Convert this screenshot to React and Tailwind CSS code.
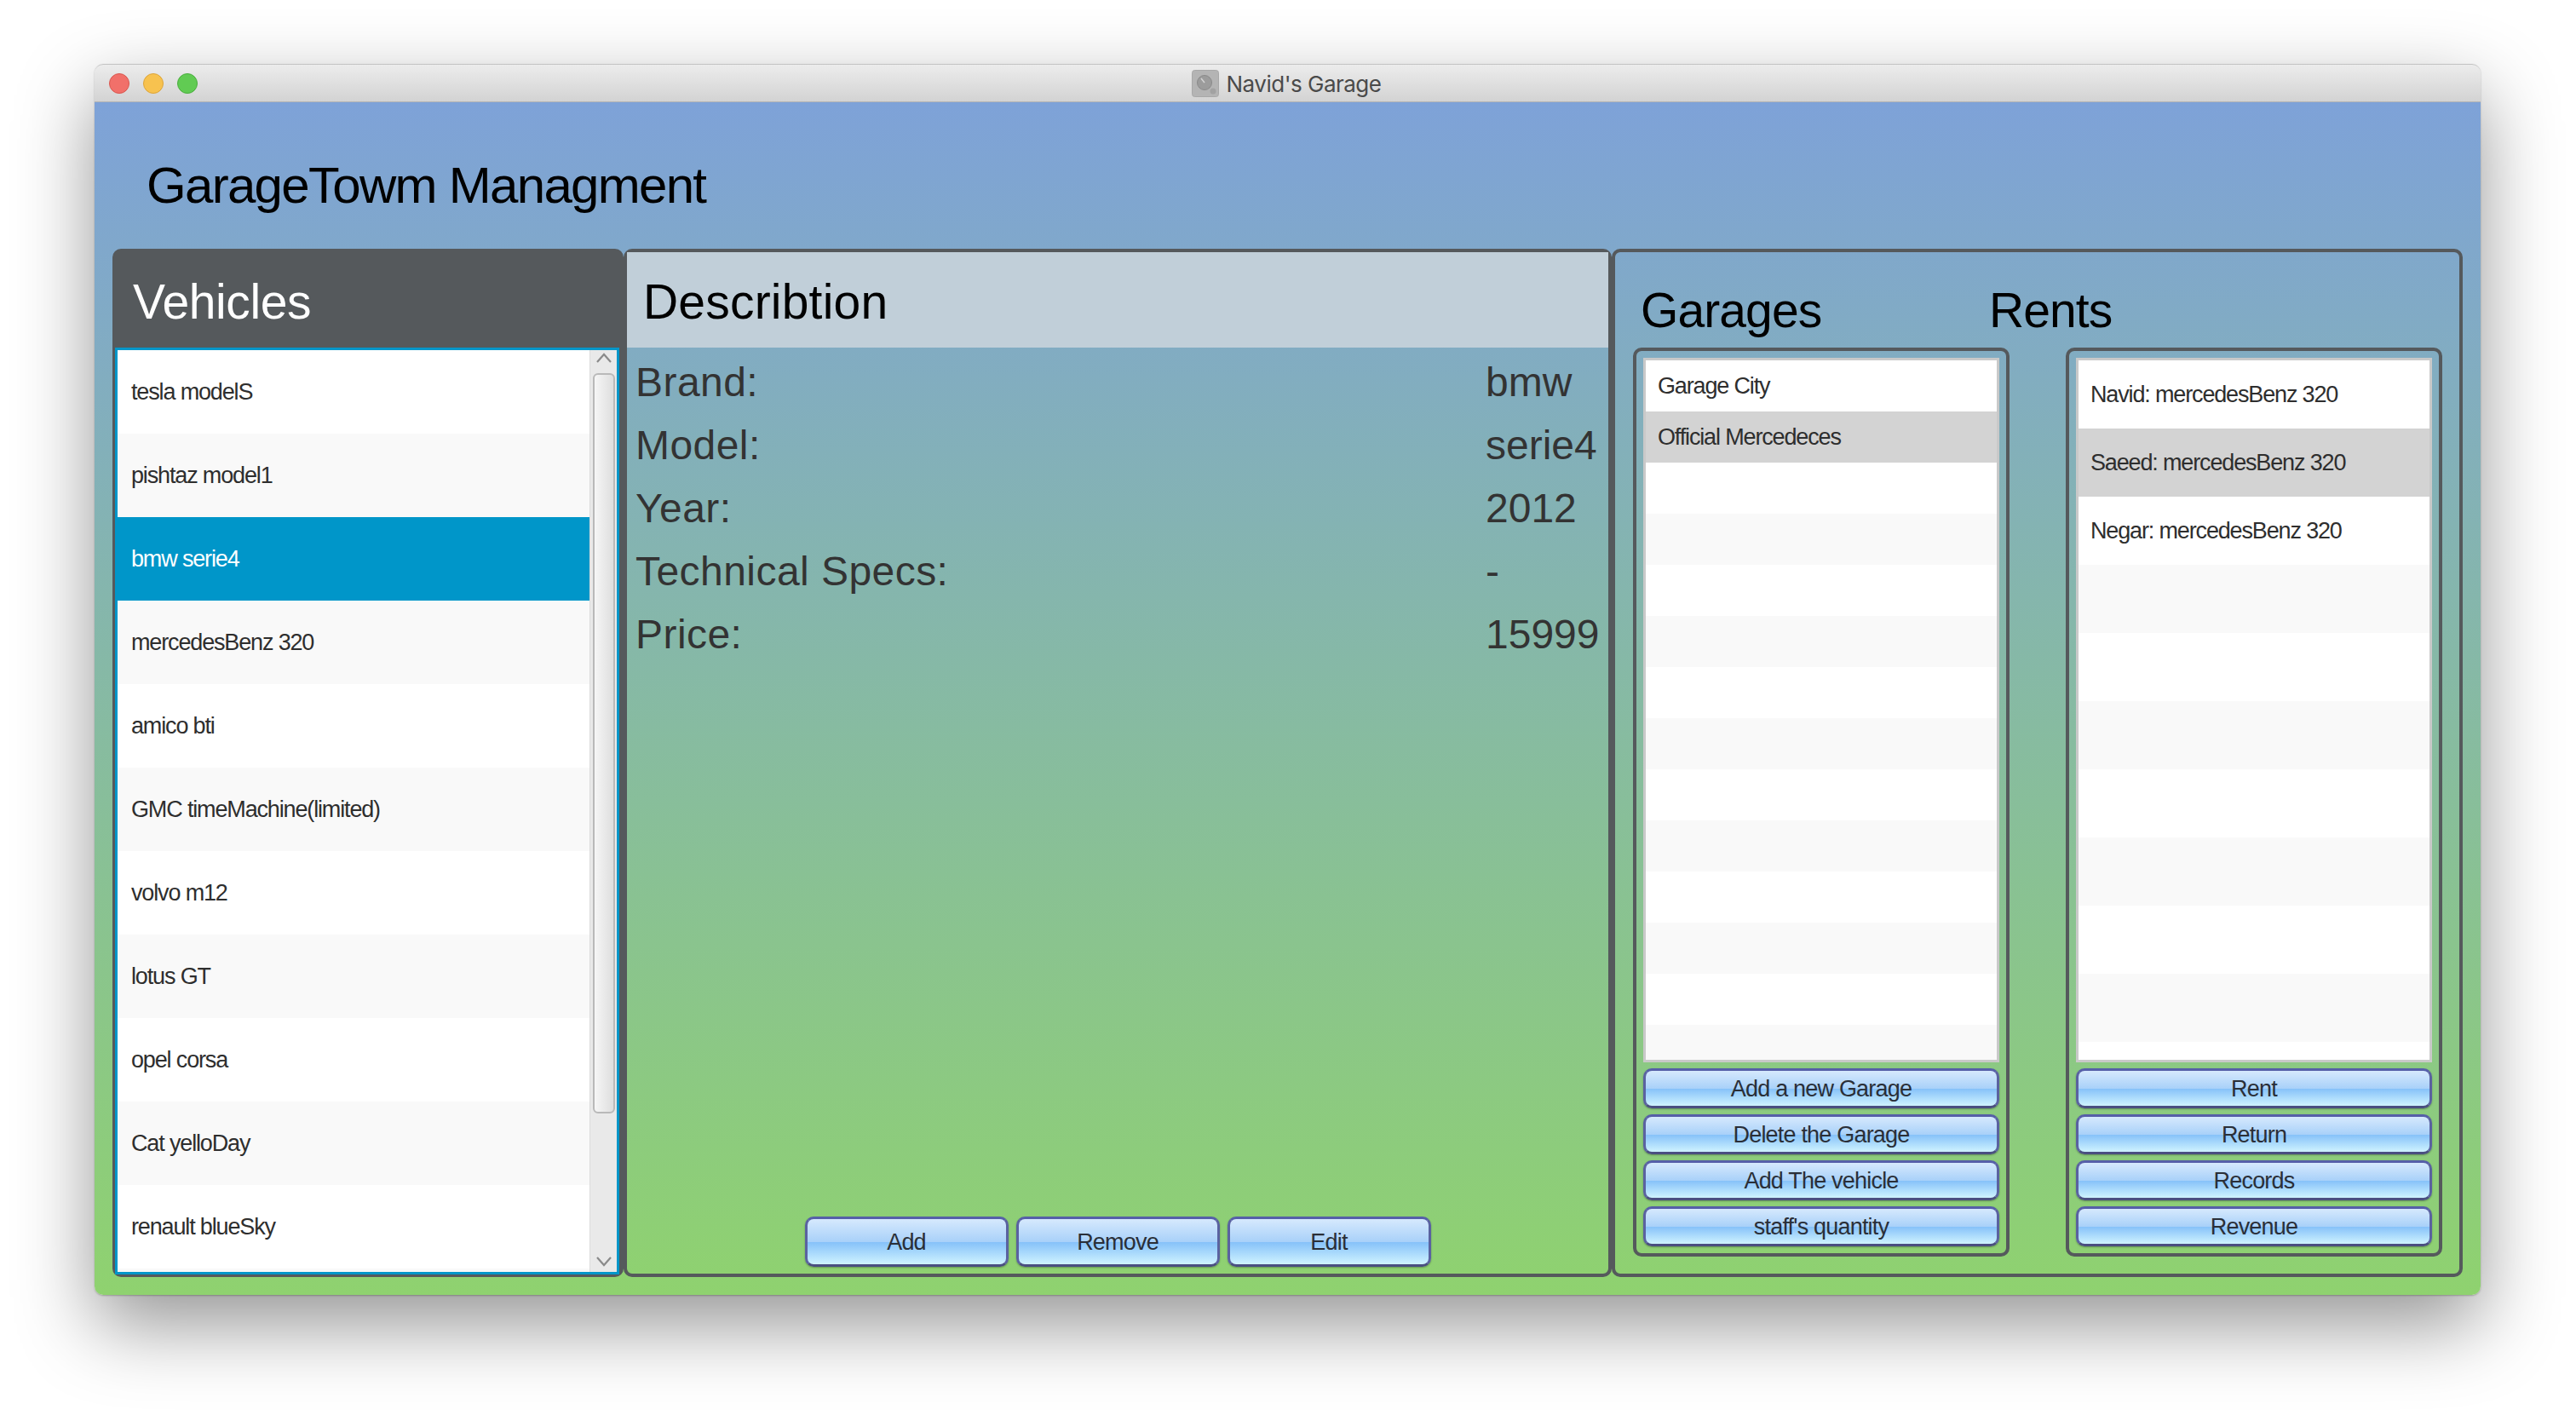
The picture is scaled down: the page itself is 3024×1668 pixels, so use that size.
import React from 'react';

const vehicles = ['tesla modelS', 'pishtaz model1', 'bmw serie4', 'mercedesBenz 320', 'amico bti', 'GMC timeMachine(limited)', 'volvo m12', 'lotus GT', 'opel corsa', 'Cat yelloDay', 'renault blueSky', ''];
const specs = [
  ['Brand:', 'bmw'],
  ['Model:', 'serie4'],
  ['Year:', '2012'],
  ['Technical Specs:', '-'],
  ['Price:', '15999'],
];
const garages = ['Garage City', 'Official Mercedeces', ...Array(12).fill('')];
const rents = ['Navid: mercedesBenz 320', 'Saeed: mercedesBenz 320', 'Negar: mercedesBenz 320', ...Array(8).fill('')];

function GlossButton({ label, className }) {
  return (
    <button className={`rounded-[10px] border-[3px] border-t-[#565fa8] border-x-[#5a62a0] border-b-[#4a4f80] bg-[linear-gradient(#d6e9fd_0%,#a9d1f9_50%,#84c0f9_50%,#cff3ff_100%)] pt-[2px] text-[27px] tracking-[-0.8px] text-[#2a2f38] leading-none shadow-[0_1px_2px_rgba(0,0,0,0.3)] ${className}`}>
      {label}
    </button>
  );
}

function Chevron({ up }) {
  return (
    <svg width="18" height="12" viewBox="0 0 18 12" fill="none" stroke="#8a8a8a" strokeWidth="2.2">
      <polyline points={up ? '1,11 9,2 17,11' : '1,1 9,10 17,1'} />
    </svg>
  );
}

function SideList({ items, rowClass, selected, textPad }) {
  return (
    <div className="h-[827px] border-[3px] border-[#c9c9c9] overflow-hidden bg-white">
      {items.map((t, i) => (
        <div
          key={i}
          className={`${rowClass} flex items-center ${textPad} text-[27px] tracking-[-1.15px] text-[#2e2e2e] ${i === selected ? 'bg-[#d3d3d3]' : i % 2 ? 'bg-[#f9f9f9]' : 'bg-white'}`}
        >
          {t}
        </div>
      ))}
    </div>
  );
}

export default function App() {
  return (
    <div className="w-[3024px] h-[1668px] bg-white pl-[111px] pt-[75px] font-['Liberation_Sans',Arial,sans-serif] overflow-hidden">
      <div className="w-[2801px] h-[1445px] rounded-[10px] flex flex-col shadow-[0_35px_90px_rgba(0,0,0,0.42),0_1px_2px_rgba(0,0,0,0.25)]">
        {/* title bar */}
        <div className="relative h-[45px] shrink-0 rounded-t-[10px] border-t border-[#c4c4c4] border-b border-b-[#b5b5b5] bg-[linear-gradient(#ececec,#d3d3d3)] flex items-center justify-center">
          <div className="absolute left-[17px] top-[10px] flex gap-[16px]">
            <span className="w-[24px] h-[24px] rounded-full bg-[#f1706a] border border-[#d9574f]" />
            <span className="w-[24px] h-[24px] rounded-full bg-[#f7c24f] border border-[#dca53a]" />
            <span className="w-[24px] h-[24px] rounded-full bg-[#61cb53] border border-[#4bae3f]" />
          </div>
          <div className="flex items-center gap-[9px] -ml-[3px]">
            <svg width="32" height="32" viewBox="0 0 32 32">
              <rect x="0.5" y="0.5" width="31" height="31" rx="3" fill="#b4b4b4" stroke="#a8a8a8" />
              <circle cx="15" cy="15" r="8.5" fill="#9c9c9c" stroke="#8a8a8a" />
              <line x1="15" y1="15" x2="11" y2="10" stroke="#d4d4d4" strokeWidth="1.5" />
              <circle cx="25" cy="25" r="3.5" fill="#a2a2a2" />
            </svg>
            <span className="pt-[2px] text-[26px] text-[#4a4a4a] font-['Inter',sans-serif] tracking-[-0.5px]">Navid's Garage</span>
          </div>
        </div>

        {/* window body */}
        <div className="flex-1 min-h-0 flex flex-col rounded-b-[10px] bg-[linear-gradient(#7ea2d8,#8fd26f)] px-[21px] pb-[21px]">
          <div className="h-[172px] shrink-0 pl-[40px] pt-[63px] text-[60px] leading-[70px] tracking-[-1.7px] text-black">GarageTowm Managment</div>

          <div className="flex-1 min-h-0 flex">
            {/* vehicles */}
            <div className="w-[600px] rounded-[10px] bg-[#55595c] pl-[3px] pr-[5px] pb-[3px] flex flex-col">
              <div className="h-[116px] shrink-0 pl-[21px] pt-[30px] text-[57px] leading-[64px] tracking-[-0.4px] text-white">Vehicles</div>
              <div className="flex-1 min-h-0 flex border-[3px] border-[#0096c9] bg-white overflow-hidden">
                <div className="flex-1 overflow-hidden">
                  {vehicles.map((v, i) => (
                    <div
                      key={i}
                      className={`h-[98px] flex items-center pl-[16px] text-[27px] tracking-[-1.15px] ${i === 2 ? 'bg-[#0096c9] text-white' : i % 2 ? 'bg-[#f9f9f9] text-[#2e2e2e]' : 'bg-white text-[#2e2e2e]'}`}
                    >
                      {v}
                    </div>
                  ))}
                </div>
                <div className="w-[32px] shrink-0 bg-[#e9e9e9] border-l border-[#dcdcdc] flex flex-col items-center">
                  <div className="h-[15px] shrink-0 flex items-end"><Chevron up /></div>
                  <div className="w-[26px] h-[869px] shrink-0 mt-[12px] rounded-[6px] border-2 border-[#b9b9b9] bg-[linear-gradient(90deg,#f6f6f6,#dedede)]" />
                  <div className="flex-1 flex items-end pb-[6px]"><Chevron /></div>
                </div>
              </div>
            </div>

            {/* description */}
            <div className="w-[1160px] rounded-[10px] border-[4px] border-[#55595c] flex flex-col">
              <div className="h-[112px] shrink-0 bg-[#c1cfd9] pl-[19px] pt-[26px] text-[57px] leading-[64px] tracking-[0.2px] text-black">Describtion</div>
              <div className="flex-1 min-h-0 flex flex-col pl-[10px] pt-[4px] text-[48px] tracking-[0.45px] text-[#333]">
                {specs.map(([k, v]) => (
                  <div key={k} className="h-[74px] flex items-center">
                    <span className="w-[998px]">{k}</span>
                    <span className="tracking-normal">{v}</span>
                  </div>
                ))}
              </div>
              <div className="flex gap-[9px] justify-center mb-[8px]">
                <GlossButton label="Add" className="w-[239px] h-[59px]" />
                <GlossButton label="Remove" className="w-[239px] h-[59px]" />
                <GlossButton label="Edit" className="w-[239px] h-[59px]" />
              </div>
            </div>

            {/* garages and rents */}
            <div className="w-[999px] rounded-[10px] border-[4px] border-[#55595c] pl-[21px] pr-[20px] flex flex-col">
              <div className="h-[112px] shrink-0 flex pt-[36px] text-[57px] leading-[64px] tracking-[-0.9px] text-black">
                <span className="w-[418px] pl-[9px]">Garages</span>
                <span>Rents</span>
              </div>
              <div className="flex justify-between">
                <div className="w-[442px] h-[1067px] rounded-[10px] border-[4px] border-[#55595c] px-[8px] pt-[8px] flex flex-col">
                  <SideList items={garages} rowClass="h-[60px]" selected={1} textPad="pl-[14px]" />
                  <div className="flex flex-col gap-[7px] mt-[7px]">
                    {['Add a new Garage', 'Delete the Garage', 'Add The vehicle', "staff's quantity"].map(b => (
                      <GlossButton key={b} label={b} className="h-[47px] w-full" />
                    ))}
                  </div>
                </div>
                <div className="w-[442px] h-[1067px] rounded-[10px] border-[4px] border-[#55595c] px-[8px] pt-[8px] flex flex-col">
                  <SideList items={rents} rowClass="h-[80px]" selected={1} textPad="pl-[14px]" />
                  <div className="flex flex-col gap-[7px] mt-[7px]">
                    {['Rent', 'Return', 'Records', 'Revenue'].map(b => (
                      <GlossButton key={b} label={b} className="h-[47px] w-full" />
                    ))}
                  </div>
                </div>
              </div>
            </div>
          </div>
        </div>
      </div>
    </div>
  );
}
